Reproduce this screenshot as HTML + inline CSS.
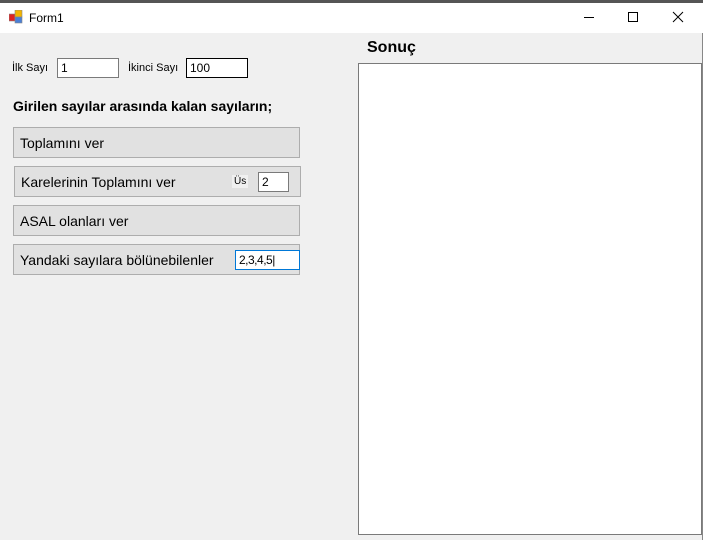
<!DOCTYPE html>
<html><head><style>
*{margin:0;padding:0;box-sizing:border-box}
body{width:703px;height:540px;overflow:hidden;background:#f0f0f0;font-family:"Liberation Sans",sans-serif;position:relative}
.a{position:absolute}
.btn{position:absolute;left:13px;width:287px;height:31px;background:#e1e1e1;border:1px solid #adadad;font-size:14px;color:#000;padding:7px 0 0 6px}
.tb{position:absolute;background:#fff;border:1px solid #7a7a7a;font-size:12px;padding:2px 0 0 3px;height:20px}
</style></head><body>
<div class="a" style="left:0;top:0;width:703px;height:3px;background:#555"></div>
<div class="a" style="left:0;top:3px;width:703px;height:30px;background:#fff"></div>
<svg class="a" style="left:9px;top:10px" width="14" height="14"><rect x="0" y="4" width="6" height="7" fill="#d22" stroke="#888" stroke-width=".6"/><rect x="6" y="0" width="7" height="7" fill="#f2b400" stroke="#888" stroke-width=".6"/><rect x="6" y="7" width="7" height="6" fill="#4a7fd6" stroke="#888" stroke-width=".6"/></svg>
<div class="a" style="left:29px;top:11px;font-size:12px">Form1</div>
<svg class="a" style="left:580px;top:10px" width="110" height="14"><line x1="4" y1="7.5" x2="14" y2="7.5" stroke="#000"/><rect x="48.5" y="2.5" width="9" height="9" fill="none" stroke="#000"/><path d="M93 2L103 12M103 2L93 12" stroke="#000"/></svg>
<div class="a" style="left:702px;top:33px;width:1px;height:507px;background:#888"></div>
<div class="a" style="left:12px;top:62px;font-size:11px">İlk Sayı</div>
<div class="tb" style="left:57px;top:58px;width:62px">1</div>
<div class="a" style="left:128px;top:62px;font-size:11px">İkinci Sayı</div>
<div class="tb" style="left:186px;top:58px;width:62px;border-color:#000">100</div>
<div class="a" style="left:13px;top:98px;font-size:14px;font-weight:bold">Girilen sayılar arasında kalan sayıların;</div>
<div class="btn" style="top:127px">Toplamını ver</div>
<div class="btn" style="top:166px;left:14px">Karelerinin Toplamını ver</div>
<div class="a" style="left:232px;top:175px;width:16px;height:13px;background:#f0f0f0;font-size:10px;padding:1px 0 0 2px;line-height:11px">Üs</div>
<div class="tb" style="left:258px;top:172px;width:31px">2</div>
<div class="btn" style="top:205px">ASAL olanları ver</div>
<div class="btn" style="top:244px">Yandaki sayılara bölünebilenler</div>
<div class="tb" style="left:235px;top:250px;width:65px;border-color:#0078d7;letter-spacing:-0.5px">2,3,4,5|</div>
<div class="a" style="left:367px;top:39px;font-size:16px;font-weight:bold">Sonuç</div>
<div class="a" style="left:358px;top:63px;width:344px;height:472px;background:#fff;border:1px solid #7a7a7a"></div>
</body></html>
